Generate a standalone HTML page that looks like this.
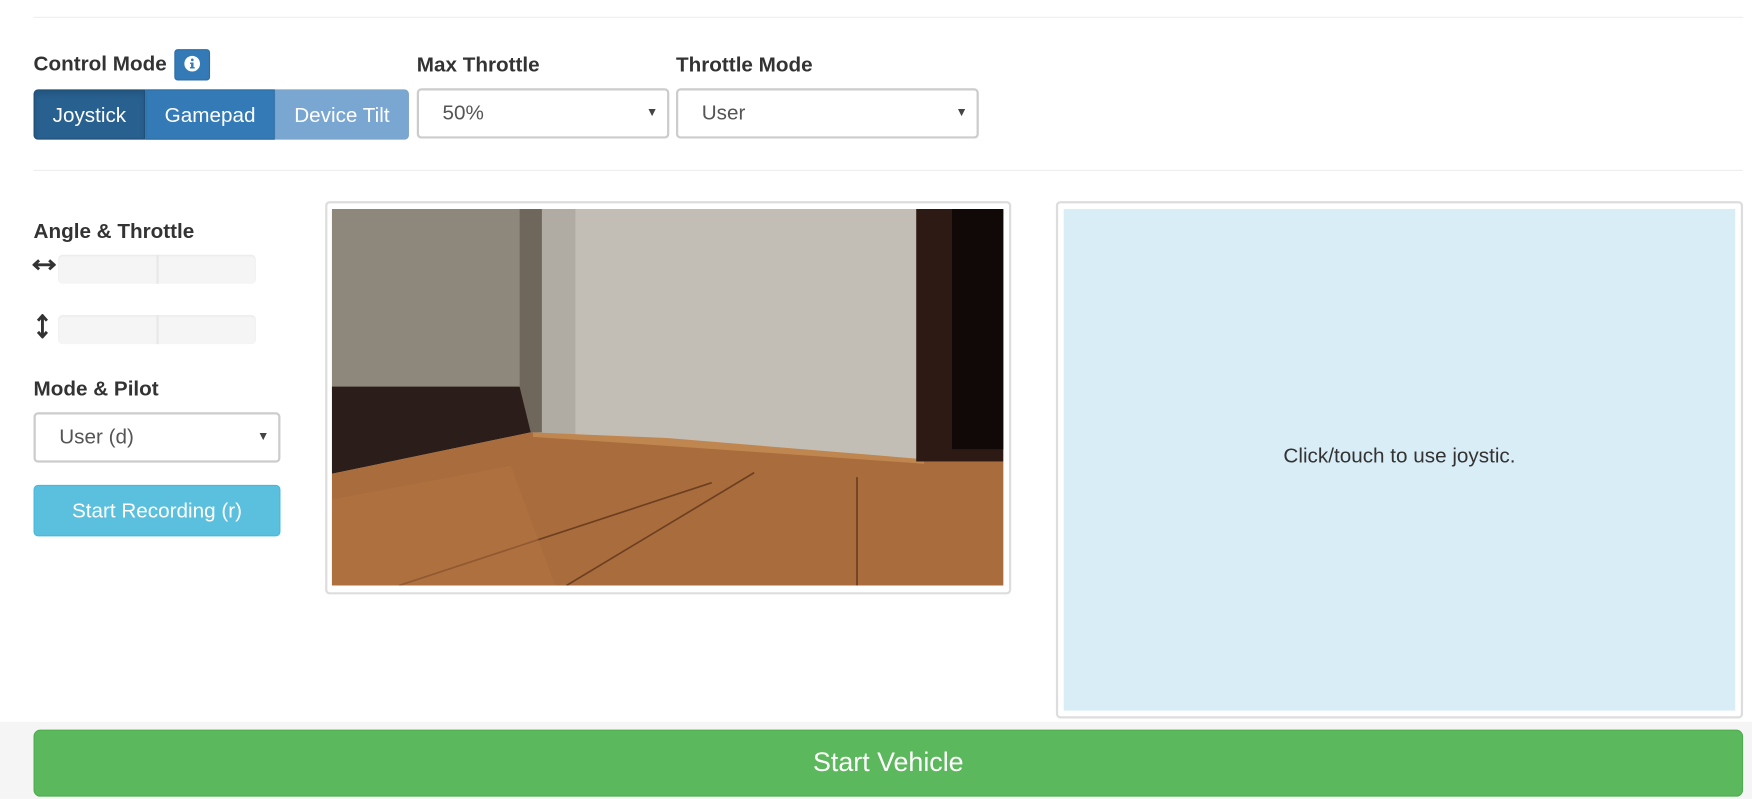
<!DOCTYPE html>
<html><head><meta charset="utf-8"><style>
html,body{margin:0;padding:0;background:#fff;overflow:hidden;width:1752px;height:799px}
#w{position:absolute;left:0;top:0;width:1568px;height:715px;transform:scale(1.11735);transform-origin:0 0;font-family:"Liberation Sans",Arial,sans-serif;color:#333;font-size:18.5px}
.a{position:absolute}
.hr{position:absolute;left:30px;width:1530px;height:1px;background:#eee}
.lb{position:absolute;font-weight:bold;line-height:22px}
.sel{position:absolute;box-sizing:border-box;border:2px solid #ccc;border-radius:4px;background:#fff;line-height:40px;padding-left:21px;color:#555}
.sel:after{content:"▼";position:absolute;right:8px;top:0;font-size:11px;color:#444}
.bar{position:absolute;left:52px;width:177px;height:26px;background:#f5f5f5;border-radius:4px;box-shadow:inset 0 1px 2px rgba(0,0,0,.05)}
.bar i{position:absolute;left:88px;top:0;width:2px;height:26px;background:#e8e8e8}
.btn{position:absolute;box-sizing:border-box;color:#fff;text-align:center}
</style></head><body><div id="w">
<div class="hr" style="top:15px"></div>
<div class="lb" style="left:30px;top:46px">Control Mode</div>
<div class="a" style="left:156px;top:44px;width:32px;height:28px;background:#337ab7;border-radius:3px;border:1px solid #2e6da4;box-sizing:border-box">
<svg width="30" height="26" viewBox="0 0 30 26"><circle cx="15" cy="12" r="7" fill="#fff"/><rect x="14" y="11" width="2.2" height="5" fill="#337ab7"/><rect x="13" y="15" width="4.2" height="1.3" fill="#337ab7"/><rect x="13" y="11" width="3" height="1.2" fill="#337ab7"/><circle cx="15.1" cy="8.6" r="1.2" fill="#337ab7"/></svg></div>
<div class="btn" style="left:30px;top:80px;width:100px;height:45px;line-height:43px;background:#286090;border:1px solid #204d74;border-radius:4px 0 0 4px;box-shadow:inset 0 3px 5px rgba(0,0,0,.125)">Joystick</div>
<div class="btn" style="left:130px;top:80px;width:116px;height:45px;line-height:43px;background:#337ab7;border:1px solid #2e6da4">Gamepad</div>
<div class="btn" style="left:246px;top:80px;width:120px;height:45px;line-height:43px;background:#7aa7d1;border:1px solid #79a3c9;border-radius:0 4px 4px 0">Device Tilt</div>
<div class="lb" style="left:373px;top:47px">Max Throttle</div>
<div class="sel" style="left:373px;top:79px;width:226px;height:45px">50%</div>
<div class="lb" style="left:605px;top:47px">Throttle Mode</div>
<div class="sel" style="left:605px;top:79px;width:271px;height:45px">User</div>
<div class="hr" style="top:152px"></div>
<div class="lb" style="left:30px;top:196px">Angle &amp; Throttle</div>
<svg class="a" style="left:29px;top:231px" width="21" height="12" viewBox="0 0 21 12"><path d="M2 6H19M6 2L1.5 6L6 10M15 2L19.5 6L15 10" stroke="#333" stroke-width="2.6" fill="none"/></svg>
<div class="bar" style="top:228px"><i></i></div>
<svg class="a" style="left:32px;top:281px" width="12" height="22" viewBox="0 0 12 22"><path d="M6 2V20M2 6L6 1.5L10 6M2 16L6 20.5L10 16" stroke="#333" stroke-width="2.6" fill="none"/></svg>
<div class="bar" style="top:282px"><i></i></div>
<div class="lb" style="left:30px;top:337px">Mode &amp; Pilot</div>
<div class="sel" style="left:30px;top:369px;width:221px;height:45px">User (d)</div>
<div class="btn" style="left:30px;top:434px;width:221px;height:46px;line-height:44px;background:#5bc0de;border:1px solid #46b8da;border-radius:4px">Start Recording (r)</div>
<div class="a" style="left:291px;top:180px;width:614px;height:352px;box-sizing:border-box;border:2px solid #ddd;border-radius:4px;background:#fff"></div>
<svg class="a" style="left:297px;top:187px" width="601" height="337" viewBox="0 0 601 337" preserveAspectRatio="none">
<rect width="601" height="337" fill="#c2beb5"/>
<rect x="188" y="0" width="30" height="210" fill="#b0aca3"/>
<rect x="0" y="0" width="168" height="165" fill="#8e877b"/>
<rect x="168" y="0" width="20" height="200" fill="#6f675c"/>
<polygon points="0,159 168,159 178,200 0,237" fill="#2b1d19"/>
<polygon points="0,237 178,200 300,210 530,226 601,226 601,337 0,337" fill="#a96d3d"/>
<polygon points="180,200 300,205 530,224 530,228 300,212 180,204" fill="#c08650"/>
<rect x="523" y="0" width="78" height="226" fill="#2e1a14"/>
<rect x="555" y="0" width="46" height="215" fill="#110907"/>
<path d="M60 337L340 245M210 337L378 236M470 337L470 240" stroke="#6d3f20" stroke-width="1.5" fill="none"/>
<polygon points="0,260 160,230 200,337 0,337" fill="#b37442" opacity=".5"/>
</svg>
<div class="a" style="left:945px;top:180px;width:615px;height:463px;box-sizing:border-box;border:2px solid #ddd;border-radius:4px;background:#fff"></div>
<div class="a" style="left:952px;top:187px;width:601px;height:449px;background:#d9edf7;text-align:center;line-height:22px;font-size:18.5px"><div style="margin-top:210px">Click/touch to use joystic.</div></div>
<div class="a" style="left:0;top:646px;width:1568px;height:69px;background:#f5f5f5"></div>
<div class="btn" style="left:30px;top:653px;width:1530px;height:60px;line-height:58px;background:#5cb85c;border:1px solid #4cae4c;border-radius:6px;font-size:24px">Start Vehicle</div>
</div></body></html>
